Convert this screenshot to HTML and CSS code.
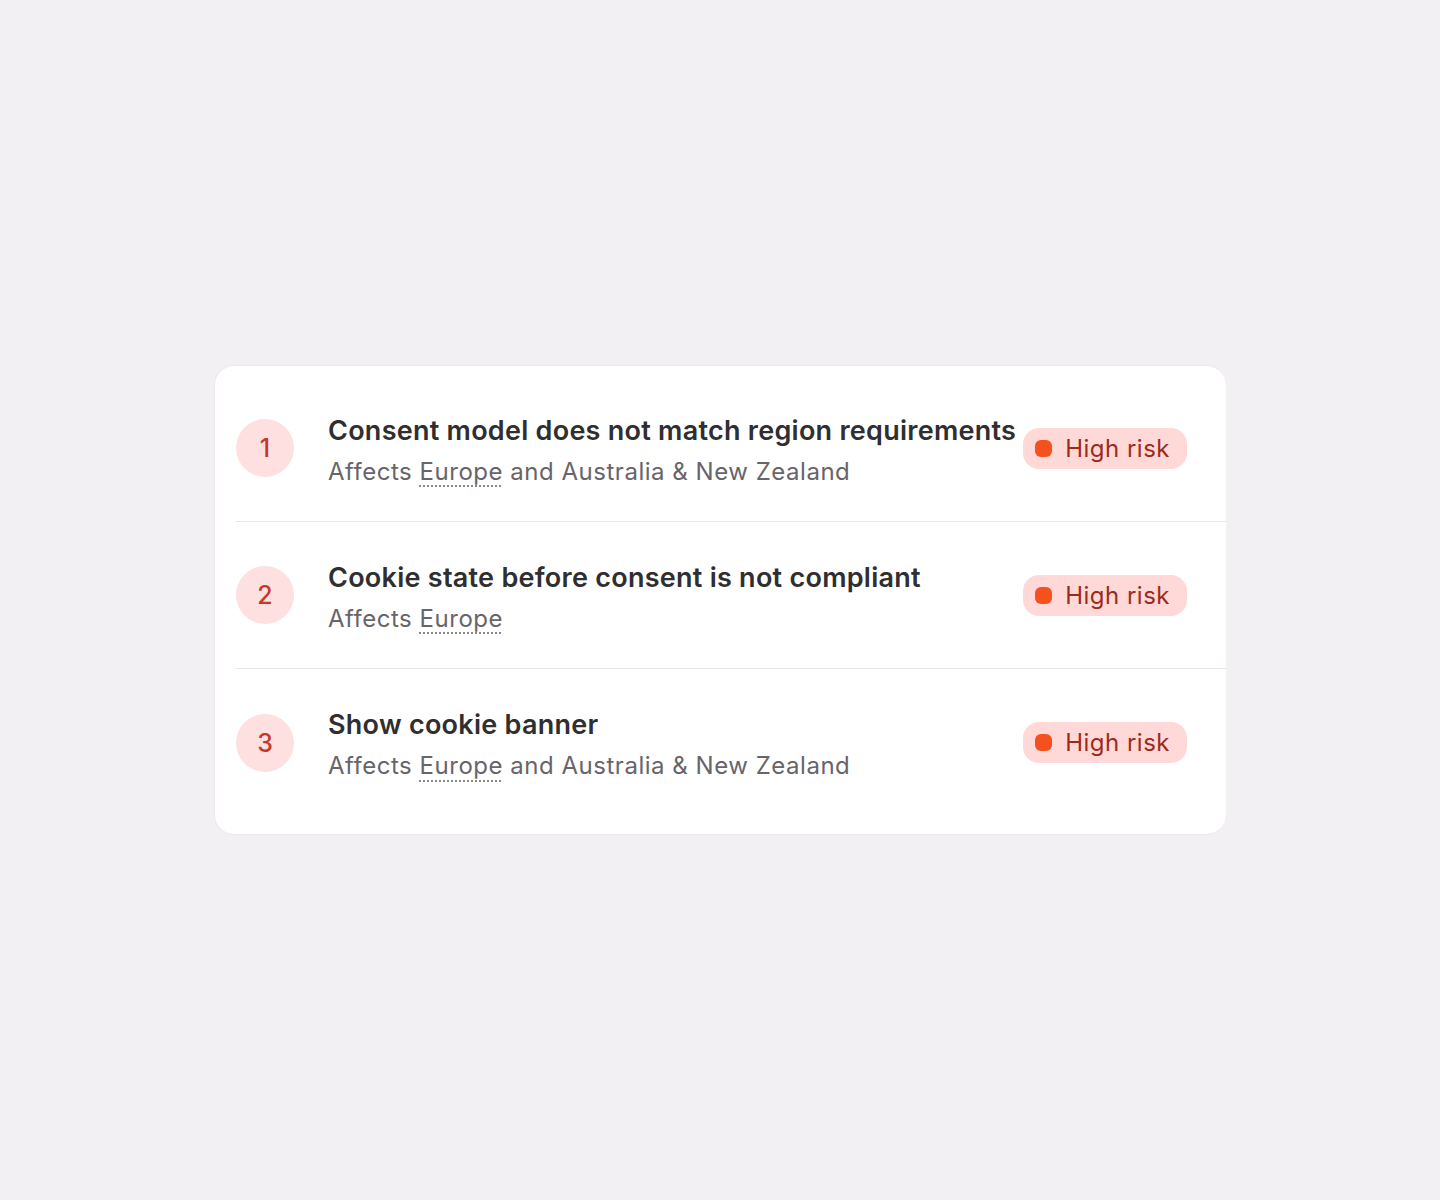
FILE: index.html
```html
<!DOCTYPE html>
<html lang="en">
<head>
<meta charset="utf-8">
<title>Issues</title>
<link rel="stylesheet" href="styles.css">
</head>
<body>
<main class="page">
  <section class="card">
    <ul class="list">
      <li class="row">
        <span class="num">1</span>
        <div class="text">
          <div class="title">Consent model does not match region requirements</div>
          <div class="sub">Affects <span class="region">Europe</span> and Australia &amp; New Zealand</div>
        </div>
        <span class="badge"><span class="dot"></span>High risk</span>
      </li>
      <li class="row">
        <span class="num">2</span>
        <div class="text">
          <div class="title">Cookie state before consent is not compliant</div>
          <div class="sub">Affects <span class="region">Europe</span></div>
        </div>
        <span class="badge"><span class="dot"></span>High risk</span>
      </li>
      <li class="row">
        <span class="num">3</span>
        <div class="text">
          <div class="title">Show cookie banner</div>
          <div class="sub">Affects <span class="region">Europe</span> and Australia &amp; New Zealand</div>
        </div>
        <span class="badge"><span class="dot"></span>High risk</span>
      </li>
    </ul>
  </section>
</main>
</body>
</html>
```
FILE: styles.css
```css
html, body {
  margin: 0;
  padding: 0;
}
body {
  background: #f2f0f3;
  font-family: Inter, "Noto Sans", "Liberation Sans", sans-serif;
  width: 1440px;
  height: 1200px;
}
.page {
  padding-top: 365px;
  padding-left: 214px;
}
.card {
  box-sizing: border-box;
  width: 1012px;
  background: #ffffff;
  border: 1px solid #ebe9ec;
  border-right: none;
  border-radius: 20px;
  padding: 9px 0 18px 21px;
}
.list {
  list-style: none;
  margin: 0;
  padding: 0;
}
.row {
  display: flex;
  align-items: center;
  height: 147px;
  padding-right: 39px;
  border-bottom: 1px solid #e8e6ea;
  box-sizing: border-box;
}
.row:last-child {
  border-bottom: none;
}
.num {
  flex: none;
  width: 58px;
  height: 58px;
  border-radius: 50%;
  background: #fde0df;
  color: #c5392c;
  font-size: 25px;
  font-weight: 500;
  display: flex;
  align-items: center;
  justify-content: center;
}
.text {
  flex: 1;
  min-width: 0;
  margin-left: 34px;
  margin-top: 4px;
  display: flex;
  flex-direction: column;
  gap: 10px;
}
.title {
  font-size: 27px;
  font-weight: 600;
  color: #2f2e31;
  line-height: 33px;
  letter-spacing: 0.26px;
  white-space: nowrap;
}
.sub {
  font-size: 24px;
  color: #67646a;
  line-height: 30px;
  letter-spacing: 0.52px;
}
.region {
  text-decoration: underline dotted #8a878d;
  text-decoration-thickness: 2px;
  text-underline-offset: 6px;
}
.badge {
  flex: none;
  display: flex;
  align-items: center;
  height: 41px;
  box-sizing: border-box;
  padding: 0 17px 0 12px;
  border-radius: 16px;
  background: #ffd9d8;
  color: #9c2b1c;
  font-size: 24px;
  letter-spacing: 0.5px;
  margin-left: 6px;
}
.dot {
  width: 17px;
  height: 17px;
  border-radius: 6px;
  background: #f5511f;
  margin-right: 13px;
}
```
